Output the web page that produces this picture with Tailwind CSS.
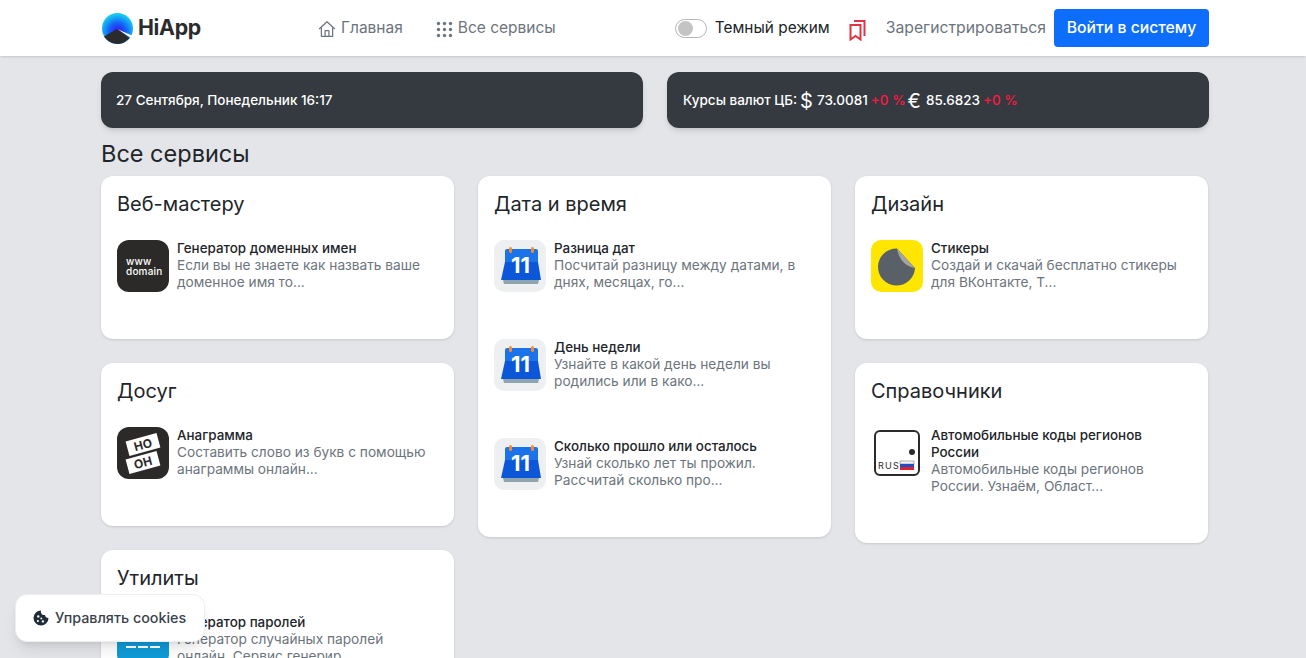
<!DOCTYPE html>
<html lang="ru">
  <head>
    <meta charset="UTF-8" />
    <script src="https://cdn.jsdelivr.net/npm/@tailwindcss/browser@4"></script>
    <title>HiApp</title>
  </head>
  <body class="bg-[#e4e5e9] font-['Inter','Noto_Sans',sans-serif] h-[658px] overflow-hidden relative">
    <header class="bg-white h-14 shadow-sm">
      <div class="w-[1108px] ml-[101px] h-full flex items-center">
        <div class="flex items-center w-[217px]">
          <svg width="33" height="33" viewBox="0 0 33 33">
            <defs>
              <radialGradient id="logoSky" cx="0.5" cy="0.6" r="0.55">
                <stop offset="0" stop-color="#3a10f0" />
                <stop offset="0.5" stop-color="#1460f8" />
                <stop offset="1" stop-color="#16c8f0" />
              </radialGradient>
            </defs>
            <circle cx="16.5" cy="16.5" r="15.5" fill="url(#logoSky)" />
            <path d="M16 17 L31 23.5 L30 26 Z" fill="#fff" />
            <path d="M3 24.5 L16 17 L28.5 26 A15.5 15.5 0 0 1 5 27Z" fill="#2b2b2b" />
          </svg>
          <span class="ml-[4px] text-[21.3px] font-bold text-[#2b2b2b] tracking-[-0.3px]">HiApp</span>
        </div>
        <nav class="flex items-center text-[15.5px] text-[#6c757d]">
          <svg width="18" height="18" viewBox="0 0 16 16" fill="none" stroke="#6c757d" stroke-width="1.1" stroke-linejoin="round" class="mr-[5px] mt-[2px]">
            <path d="M1 8 L8 1.5 L15 8" />
            <path d="M3 6.5 V14.5 H13 V6.5" />
            <path d="M6.3 14.5 V9.5 H9.7 V14.5" />
          </svg>
          <span>Главная</span>
          <svg width="17" height="17" viewBox="0 0 17 17" fill="#6c757d" class="ml-[33px] mr-[5px] mt-[2px]">
            <circle cx="2.5" cy="2.5" r="1.7" /><circle cx="8.5" cy="2.5" r="1.7" /><circle cx="14.5" cy="2.5" r="1.7" />
            <circle cx="2.5" cy="8.5" r="1.7" /><circle cx="8.5" cy="8.5" r="1.7" /><circle cx="14.5" cy="8.5" r="1.7" />
            <circle cx="2.5" cy="14.5" r="1.7" /><circle cx="8.5" cy="14.5" r="1.7" /><circle cx="14.5" cy="14.5" r="1.7" />
          </svg>
          <span>Все сервисы</span>
        </nav>
        <div class="ml-auto flex items-center">
          <div class="w-8 h-[19px] rounded-full border border-[#b5b5b5] bg-white flex items-center pl-[2px]">
            <div class="w-[15px] h-[15px] rounded-full bg-[#c4c4c4]"></div>
          </div>
          <span class="ml-2 text-[15.4px] text-[#212529]">Темный режим</span>
          <svg width="17" height="22" viewBox="0 0 17 22" fill="none" stroke="#dc3545" stroke-width="2" class="ml-[19px] mt-[3px]">
            <path d="M1.5 20.5 V6 H11.5 V20.5 L6.5 17Z" />
            <path d="M5 2 H15.5 V17" />
          </svg>
          <span class="ml-[20px] text-[15.75px] text-[#6c757d]">Зарегистрироваться</span>
          <button class="ml-2 h-[38px] w-[155px] rounded bg-[#0d6efd] text-white text-[15.75px] font-medium">Войти в систему</button>
        </div>
      </div>
    </header>

    <main class="w-[1108px] ml-[101px]">
      <div class="flex gap-6 mt-4">
        <div class="w-[542px] h-14 rounded-xl bg-[#343a40] shadow-md flex items-center pl-[15px] pt-px text-[13.5px] font-medium text-white">27 Сентября, Понедельник 16:17</div>
        <div class="w-[542px] h-14 rounded-xl bg-[#343a40] shadow-md flex items-center pl-4 pt-px text-[13.5px] font-medium text-white">
          Курсы валют ЦБ:
          <span class="ml-[3px] text-[20px] leading-5 font-normal">$</span>
          <span class="ml-[4px]">73.0081</span>
          <span class="ml-[3px] text-[#ff1744]">+0 %</span>
          <span class="ml-[2px] text-[20px] leading-5 font-normal">€</span>
          <span class="ml-[5px]">85.6823</span>
          <span class="ml-[3px] text-[#ff1744]">+0 %</span>
        </div>
      </div>

      <h1 class="mt-[10px] h-[38px] text-[23.5px] leading-[32px] text-[#212529]">Все сервисы</h1>

      <div class="flex gap-6 items-start">
        <div class="w-[353px] flex flex-col gap-6">
          <section class="bg-white rounded-xl shadow-sm h-[163px] px-4 pt-[14px]">
            <h2 class="text-[20px] leading-[28px] text-[#212529] mb-[22px]">Веб-мастеру</h2>
            <div class="flex">
              <div class="w-[52px] h-[52px] shrink-0 rounded-xl bg-[#2b2a28] text-white text-[10px] leading-[10px] font-medium tracking-[0.2px] flex flex-col justify-center pl-[9px] pb-px">
                <span>www</span><span>domain</span>
              </div>
              <div class="ml-2">
                <h3 class="text-[13.4px] leading-[17px] font-medium text-[#212529]">Генератор доменных имен</h3>
                <p class="text-[13.7px] leading-[17px] text-[#6c757d]">Если вы не знаете как назвать ваше доменное имя то...</p>
              </div>
            </div>
          </section>

          <section class="bg-white rounded-xl shadow-sm h-[163px] px-4 pt-[14px]">
            <h2 class="text-[20px] leading-[28px] text-[#212529] mb-[22px]">Досуг</h2>
            <div class="flex">
              <div class="w-[52px] h-[52px] shrink-0 rounded-xl bg-[#2b2a28] flex flex-col items-center justify-center gap-[3px] text-[#2b2a28] text-[12px] leading-[15px] font-bold">
                <span class="bg-white w-[32px] text-center -rotate-[15deg]">НО</span>
                <span class="bg-white w-[32px] text-center -rotate-[15deg]">ОН</span>
              </div>
              <div class="ml-2">
                <h3 class="text-[13.4px] leading-[17px] font-medium text-[#212529]">Анаграмма</h3>
                <p class="text-[13.7px] leading-[17px] text-[#6c757d]">Составить слово из букв с помощью анаграммы онлайн...</p>
              </div>
            </div>
          </section>

          <section class="bg-white rounded-xl shadow-sm h-[163px] px-4 pt-[14px]">
            <h2 class="text-[20px] leading-[28px] text-[#212529] mb-[22px]">Утилиты</h2>
            <div class="flex">
              <div class="w-[52px] h-[52px] shrink-0 rounded-xl bg-[#0f9bd7] flex justify-center gap-[2px] pt-[32px]">
                <i class="block w-[10px] h-[2px] bg-white"></i><i class="block w-[10px] h-[2px] bg-white"></i><i class="block w-[10px] h-[2px] bg-white"></i>
              </div>
              <div class="ml-2">
                <h3 class="text-[13.4px] leading-[17px] font-medium text-[#212529]">Генератор паролей</h3>
                <p class="text-[13.7px] leading-[17px] text-[#6c757d]">Генератор случайных паролей<br />онлайн. Сервис генерир...</p>
              </div>
            </div>
          </section>
        </div>

        <div class="w-[353px]">
          <section class="bg-white rounded-xl shadow-sm h-[361px] px-4 pt-[14px]">
            <h2 class="text-[20px] leading-[28px] text-[#212529] mb-[22px]">Дата и время</h2>
            <div class="flex flex-col gap-[47px]">
              <div class="flex">
                <svg width="52" height="52" viewBox="0 0 52 52" class="shrink-0">
                  <rect width="52" height="52" rx="10" fill="#eeeff0" />
                  <path d="M9 40 H45 L44 44 H10Z" fill="#90a4ae" />
                  <path d="M11 11 Q11 9 13 9 H42 Q44 9 44 11 V24 H11Z" fill="#1a73e8" />
                  <path d="M11 22 H44 L47 40 H7Z" fill="#0b57d8" />
                  <rect x="15" y="7" width="3" height="6" rx="1.5" fill="#f28b30" />
                  <rect x="37" y="7" width="3" height="6" rx="1.5" fill="#f28b30" />
                  <text x="26.5" y="33" text-anchor="middle" fill="#fff" font-size="22" font-weight="700" font-family="Inter">11</text>
                </svg>
                <div class="ml-2">
                  <h3 class="text-[13.4px] leading-[17px] font-medium text-[#212529]">Разница дат</h3>
                  <p class="text-[13.7px] leading-[17px] text-[#6c757d]">Посчитай разницу между датами, в днях, месяцах, го...</p>
                </div>
              </div>
              <div class="flex">
                <svg width="52" height="52" viewBox="0 0 52 52" class="shrink-0">
                  <rect width="52" height="52" rx="10" fill="#eeeff0" />
                  <path d="M9 40 H45 L44 44 H10Z" fill="#90a4ae" />
                  <path d="M11 11 Q11 9 13 9 H42 Q44 9 44 11 V24 H11Z" fill="#1a73e8" />
                  <path d="M11 22 H44 L47 40 H7Z" fill="#0b57d8" />
                  <rect x="15" y="7" width="3" height="6" rx="1.5" fill="#f28b30" />
                  <rect x="37" y="7" width="3" height="6" rx="1.5" fill="#f28b30" />
                  <text x="26.5" y="33" text-anchor="middle" fill="#fff" font-size="22" font-weight="700" font-family="Inter">11</text>
                </svg>
                <div class="ml-2">
                  <h3 class="text-[13.4px] leading-[17px] font-medium text-[#212529]">День недели</h3>
                  <p class="text-[13.7px] leading-[17px] text-[#6c757d]">Узнайте в какой день недели вы родились или в како...</p>
                </div>
              </div>
              <div class="flex">
                <svg width="52" height="52" viewBox="0 0 52 52" class="shrink-0">
                  <rect width="52" height="52" rx="10" fill="#eeeff0" />
                  <path d="M9 40 H45 L44 44 H10Z" fill="#90a4ae" />
                  <path d="M11 11 Q11 9 13 9 H42 Q44 9 44 11 V24 H11Z" fill="#1a73e8" />
                  <path d="M11 22 H44 L47 40 H7Z" fill="#0b57d8" />
                  <rect x="15" y="7" width="3" height="6" rx="1.5" fill="#f28b30" />
                  <rect x="37" y="7" width="3" height="6" rx="1.5" fill="#f28b30" />
                  <text x="26.5" y="33" text-anchor="middle" fill="#fff" font-size="22" font-weight="700" font-family="Inter">11</text>
                </svg>
                <div class="ml-2">
                  <h3 class="text-[13.4px] leading-[17px] font-medium text-[#212529]">Сколько прошло или осталось</h3>
                  <p class="text-[13.7px] leading-[17px] text-[#6c757d]">Узнай сколько лет ты прожил. Рассчитай сколько про...</p>
                </div>
              </div>
            </div>
          </section>
        </div>

        <div class="w-[353px] flex flex-col gap-6">
          <section class="bg-white rounded-xl shadow-sm h-[163px] px-4 pt-[14px]">
            <h2 class="text-[20px] leading-[28px] text-[#212529] mb-[22px]">Дизайн</h2>
            <div class="flex">
              <svg width="52" height="52" viewBox="0 0 52 52" class="shrink-0">
                <rect width="52" height="52" rx="10" fill="#ffe600" />
                <path d="M26 8.5 A18.5 18.5 0 1 0 44 28 Z" fill="#5a6068" />
                <path d="M26 8.5 L44 28 C35 27 28 20 26 8.5Z" fill="#a3a3a3" />
              </svg>
              <div class="ml-2">
                <h3 class="text-[13.4px] leading-[17px] font-medium text-[#212529]">Стикеры</h3>
                <p class="text-[13.7px] leading-[17px] text-[#6c757d]">Создай и скачай бесплатно стикеры для ВКонтакте, Т...</p>
              </div>
            </div>
          </section>

          <section class="bg-white rounded-xl shadow-sm h-[180px] px-4 pt-[14px]">
            <h2 class="text-[20px] leading-[28px] text-[#212529] mb-[22px]">Справочники</h2>
            <div class="flex">
              <svg width="52" height="52" viewBox="0 0 52 52" class="shrink-0">
                <rect x="4" y="4" width="44" height="44" rx="5" fill="#fff" stroke="#2b2b2b" stroke-width="2" />
                <circle cx="41" cy="25" r="3" fill="#2b2b2b" />
                <text x="7" y="41.5" font-size="9" letter-spacing="1.2" fill="#2b2b2b" font-family="Inter">RUS</text>
                <rect x="29" y="34" width="14" height="3" fill="#f4f4f4" stroke="#444" stroke-width="0.4" />
                <rect x="29" y="37" width="14" height="3" fill="#1c4fc4" />
                <rect x="29" y="40" width="14" height="3" fill="#e02030" />
              </svg>
              <div class="ml-2">
                <h3 class="text-[13.4px] leading-[17px] font-medium text-[#212529]">Автомобильные коды регионов России</h3>
                <p class="text-[13.7px] leading-[17px] text-[#6c757d]">Автомобильные коды регионов России. Узнаём, Област...</p>
              </div>
            </div>
          </section>
        </div>
      </div>
    </main>

    <div class="absolute left-[15px] top-[594px] w-[190px] h-[48px] rounded-xl bg-white border border-[#eceef0] shadow-lg flex items-center pl-[17px] text-[14.3px] font-medium text-[#37424d]">
      <svg width="16" height="16" viewBox="0 0 16 16" class="mr-[6px]">
        <path fill="#1f2d3a" fill-rule="evenodd" d="M8 .5a7.5 7.5 0 1 0 7.5 7.5 3.5 3.5 0 0 1-3.5-3 3.5 3.5 0 0 1-4-4.5ZM5.3 5.2a1.2 1.2 0 1 1 0 2.4 1.2 1.2 0 0 1 0-2.4Zm-.4 4.7a1.1 1.1 0 1 1 0 2.2 1.1 1.1 0 0 1 0-2.2Zm5 .3a1.2 1.2 0 1 1 0 2.4 1.2 1.2 0 0 1 0-2.4ZM8.3 7.5a.9.9 0 1 1 0 1.8.9.9 0 0 1 0-1.8Z" />
      </svg>
      Управлять cookies
    </div>
  </body>
</html>
